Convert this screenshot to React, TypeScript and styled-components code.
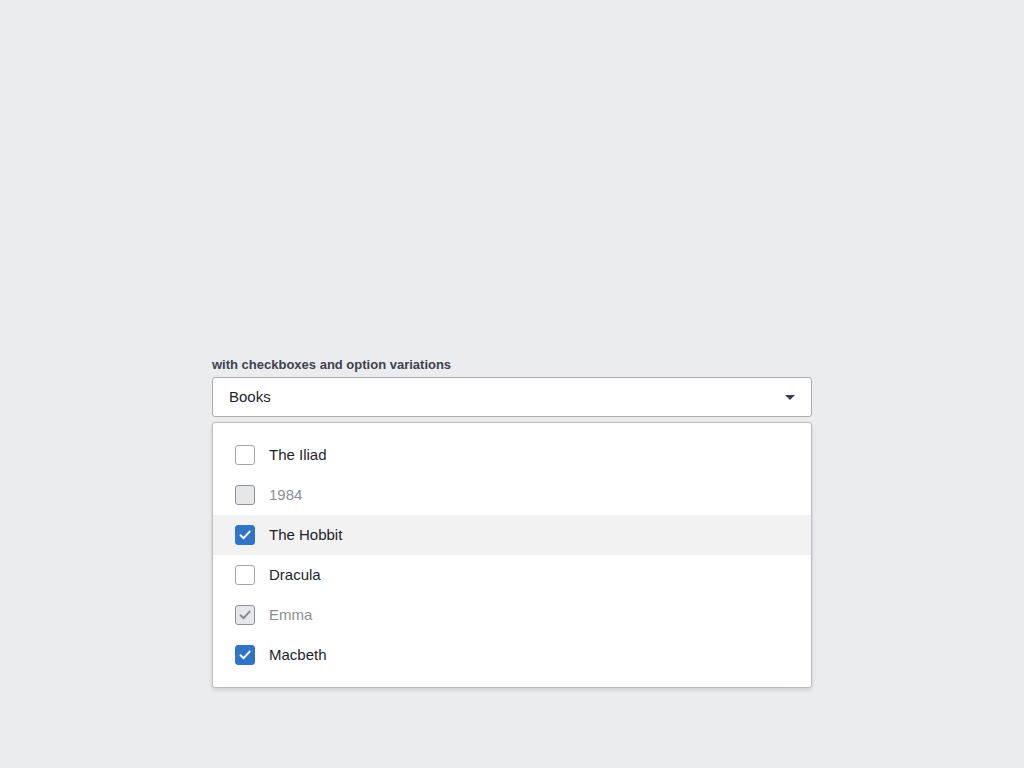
import React from "react";
import styled, { createGlobalStyle } from "styled-components";

const Global = createGlobalStyle`
  html, body { margin: 0; padding: 0; background: #ebecee; }
  body { font-family: "Liberation Sans", Arial, sans-serif; -webkit-font-smoothing: antialiased; }
`;

const Page = styled.div`
  display: flex;
  justify-content: center;
  padding-top: 357px;
  min-height: 768px;
  box-sizing: border-box;
`;

const Field = styled.div`
  width: 600px;
  display: flex;
  flex-direction: column;
`;

const Label = styled.div`
  font-size: 13px;
  font-weight: 700;
  line-height: 16px;
  color: #3d4250;
  margin-bottom: 4px;
`;

const Select = styled.div`
  height: 40px;
  box-sizing: border-box;
  border: 1px solid #a9acb1;
  border-radius: 3px;
  background: #fff;
  display: flex;
  align-items: center;
  justify-content: space-between;
  padding: 0 16px 0 16px;
  font-size: 15px;
  color: #1b1f2e;
`;

const SelectText = styled.span`
  margin-top: -2px;
`;

const Caret = styled.span`
  width: 0;
  height: 0;
  border-left: 5px solid transparent;
  border-right: 5px solid transparent;
  border-top: 5px solid #3a3e4a;
`;

const Panel = styled.div`
  margin-top: 5px;
  background: #fff;
  border: 1px solid #b9bbc0;
  border-radius: 3px;
  box-shadow: 0 2px 4px rgba(0, 0, 0, 0.12);
  padding: 12px 0;
  display: flex;
  flex-direction: column;
`;

const Option = styled.div<{ $active?: boolean; $disabled?: boolean }>`
  height: 40px;
  display: flex;
  align-items: center;
  gap: 14px;
  padding-left: 22px;
  background: ${(p) => (p.$active ? "#f2f2f2" : "transparent")};
  font-size: 15px;
  color: ${(p) => (p.$disabled ? "#8b8e95" : "#1b1f2e")};
`;

const OptionText = styled.span`
  margin-top: -2px;
`;

const Box = styled.span<{ $checked?: boolean; $disabled?: boolean }>`
  width: 20px;
  height: 20px;
  box-sizing: border-box;
  border-radius: 3px;
  display: flex;
  align-items: center;
  justify-content: center;
  border: 1px solid
    ${(p) => (p.$disabled ? "#8d9096" : p.$checked ? "#2f74c6" : "#a3a6ac")};
  background: ${(p) =>
    p.$disabled ? "#e6e7e9" : p.$checked ? "#2f74c6" : "#fff"};
`;

const Check = ({ color }: { color: string }) => (
  <svg width="14" height="14" viewBox="0 0 14 14">
    <path
      d="M2.5 7.2 L5.6 10.2 L11.6 3.6"
      fill="none"
      stroke={color}
      strokeWidth="2"
      strokeLinecap="round"
      strokeLinejoin="round"
    />
  </svg>
);

const items = [
  { label: "The Iliad" },
  { label: "1984", disabled: true },
  { label: "The Hobbit", checked: true, active: true },
  { label: "Dracula" },
  { label: "Emma", checked: true, disabled: true },
  { label: "Macbeth", checked: true },
];

export default function App() {
  return (
    <>
      <Global />
      <Page>
        <Field>
          <Label>with checkboxes and option variations</Label>
          <Select>
            <SelectText>Books</SelectText>
            <Caret />
          </Select>
          <Panel>
            {items.map((it) => (
              <Option key={it.label} $active={it.active} $disabled={it.disabled}>
                <Box $checked={it.checked} $disabled={it.disabled}>
                  {it.checked && <Check color={it.disabled ? "#85888e" : "#fff"} />}
                </Box>
                <OptionText>{it.label}</OptionText>
              </Option>
            ))}
          </Panel>
        </Field>
      </Page>
    </>
  );
}
